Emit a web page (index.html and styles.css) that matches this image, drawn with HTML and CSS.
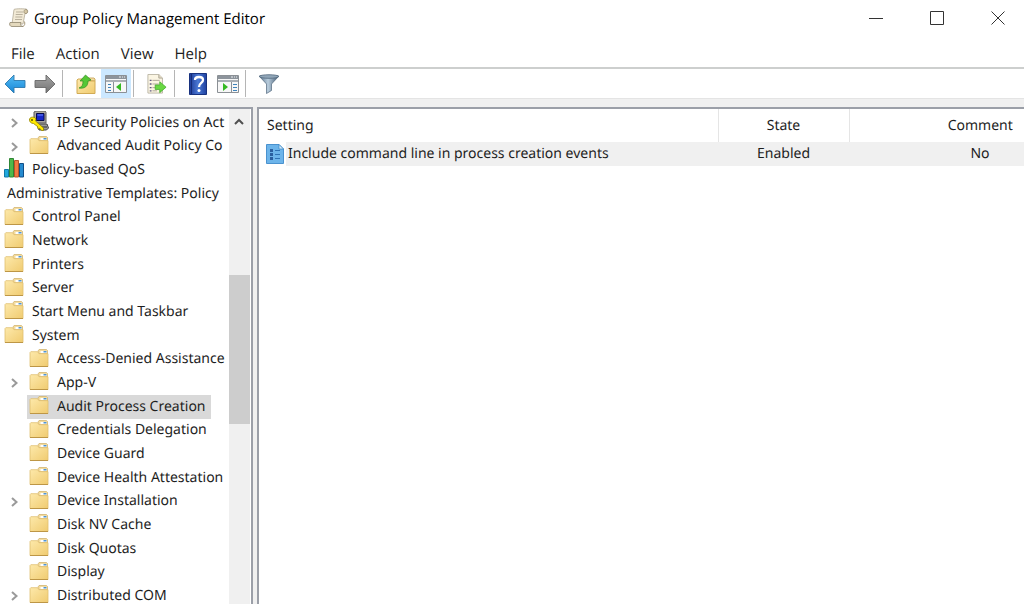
FILE: index.html
```html
<!DOCTYPE html>
<html lang="en">
<head>
<meta charset="utf-8">
<title>Group Policy Management Editor</title>
<link rel="stylesheet" href="styles.css">
</head>
<body>
<svg class="defs" aria-hidden="true">
  <defs>
    <linearGradient id="gold" x1="0" y1="0" x2="1" y2="1"><stop offset="0" stop-color="#fde9ab"/><stop offset="1" stop-color="#f0cb70"/></linearGradient>
    <linearGradient id="blue" x1="0" y1="0" x2="0" y2="1"><stop offset="0" stop-color="#55bdf5"/><stop offset="1" stop-color="#1685d6"/></linearGradient>
    <linearGradient id="grey" x1="0" y1="0" x2="0" y2="1"><stop offset="0" stop-color="#a5a5a5"/><stop offset="1" stop-color="#737373"/></linearGradient>
    <linearGradient id="steel" x1="0" y1="0" x2="1" y2="0"><stop offset="0" stop-color="#56708a"/><stop offset=".45" stop-color="#b9cddd"/><stop offset="1" stop-color="#3f566e"/></linearGradient>
    <linearGradient id="navy" x1="0" y1="0" x2="1" y2="0"><stop offset="0" stop-color="#1d3a96"/><stop offset=".5" stop-color="#4a78d4"/><stop offset="1" stop-color="#1f419f"/></linearGradient>
    <symbol id="folder" viewBox="0 0 20 20">
      <path d="M9 5.500V3l1-1.500h7.500l1 1V6z" fill="#f3dca0" stroke="#d3b571" stroke-width=".8"/>
      <path d="M11.500 3h6v2h-6z" fill="#fff"/><path d="M14.500 3h3v1.500h-3z" fill="#4f94d3"/>
      <path d="M1 4.500l.8-.8h6.700l1.500 2h9v12.800H1z" fill="url(#gold)" stroke="#dfbf70" stroke-width=".8"/>
      <path d="M1 18.500h18" stroke="#bd9646" fill="none"/>
    </symbol>
    <symbol id="panel" viewBox="0 0 22 20">
      <path d="M.5 1.500h21v17H.5z" fill="#f7f7f7" stroke="#8b9095"/>
      <path d="M1 2h20v3H1z" fill="#8d949c"/><path d="M14 3h2M17 3h1M19 3h1" stroke="#e9edf0"/>
      <path d="M1 6h20v2H1z" fill="#a9afb5"/>
    </symbol>
  </defs>
</svg>

<div class="window">
  <header class="titlebar">
    <svg class="app-icon" viewBox="0 0 20 20">
      <path d="M5 1.500C6 .5 17 .5 18 1.500s1 3.500-.5 4H16L14 16H3z" fill="#f2ead6" stroke="#b3aa96" stroke-width=".8"/>
      <path d="M16 5.500c-2-1-1-4 1-4.300 2 .5 2 4 .3 4.300z" fill="#d5c7a5" stroke="#91866e" stroke-width=".7"/>
      <path d="M1 14.500h11c-1 2 0 4 2 4H3c-2 0-3-2-2-4z" fill="#e4d9bd" stroke="#91866e" stroke-width=".8"/>
      <path d="M14 18.500c2-1 2-3 1.500-5" fill="none" stroke="#a8997a"/>
      <path d="M7 4h7M6.700 6.500h7M6.300 9h7M6 11.500h7" stroke="#b9b09d"/>
    </svg>
    <h1 class="title">Group Policy Management Editor</h1>
    <div class="window-controls">
      <button class="window-button" aria-label="Minimize"><svg viewBox="0 0 14 14"><path d="M0 7.500h14"/></svg></button>
      <button class="window-button" aria-label="Maximize"><svg viewBox="0 0 14 14"><path d="M.5 .5h13v13H.5z"/></svg></button>
      <button class="window-button" aria-label="Close"><svg viewBox="0 0 14 14"><path d="M.5 .5l13 13M13.500 .5l-13 13"/></svg></button>
    </div>
  </header>

  <nav class="menubar">
    <button class="menu">File</button>
    <button class="menu">Action</button>
    <button class="menu">View</button>
    <button class="menu">Help</button>
  </nav>

  <div class="toolbar">
    <button class="tool" aria-label="Back"><svg class="arrow" viewBox="0 0 22 20"><path d="M1 10l9-9v5.500h11v7H10V19z" fill="url(#blue)" stroke="#2c78ad" stroke-width=".9"/></svg></button>
    <button class="tool" aria-label="Forward"><svg class="arrow" viewBox="0 0 22 20"><path d="M21 10l-9-9v5.500H1v7h11V19z" fill="url(#grey)" stroke="#686868" stroke-width=".9"/></svg></button>
    <span class="separator"></span>
    <button class="tool" aria-label="Up one level"><svg viewBox="0 0 20 20"><path d="M11 6V5l1-1h6l1 1v2z" fill="#f3dca0" stroke="#cfae68"/><path d="M1 6l1-1h7l1 2h9v12.500H1z" fill="url(#gold)" stroke="#d2ab55"/><path d="M3 14c3-1 4-3 4-7H4l5.500-6L15 6l-3 1c0 5-3 8-9 7z" fill="#55c736" stroke="#318e23" stroke-width=".7"/></svg></button>
    <button class="tool tool-active" aria-label="Show console tree" aria-pressed="true"><svg class="wide" viewBox="0 0 22 20"><use href="#panel"/><path d="M8.500 8v10" stroke="#8b9095"/><path d="M3 10.500h3M3 13.500h3M3 16.500h3" stroke="#3d83bb"/><path d="M16 9v8l-5-4z" fill="#35b922"/></svg></button>
    <span class="separator"></span>
    <button class="tool" aria-label="Export list"><svg class="wide" viewBox="0 0 22 22"><path d="M1 .5h12l4 4V21H1z" fill="#fbf5e3" stroke="#b9b3a3"/><path d="M13 .5v4h4" fill="#e4dbc4" stroke="#a9a393"/><path d="M3 7h2M3 11h2M3 15h2M3 18.500h2" stroke="#615b82" stroke-width="1.500"/><path d="M6 7h8M6 11h7M6 15h6M6 18.500h5" stroke="#a9a393"/><path d="M9 12h5V8.500l7 6-7 6V17H9z" fill="#69d843" stroke="#3fa52b" stroke-width=".8"/></svg></button>
    <span class="separator"></span>
    <button class="tool" aria-label="Help topics"><svg class="book" viewBox="0 0 18 22"><path d="M.5 .5h17v21H.5z" fill="url(#navy)" stroke="#18327f"/><path d="M2.500 1v20" stroke="#152d78"/><path d="M6 7c0-4 8-4 8 0 0 3-4 3-4 7" fill="none" stroke="#fff" stroke-width="2.300"/><circle cx="10" cy="17.500" r="1.500" fill="#fff"/></svg></button>
    <button class="tool" aria-label="Show action pane"><svg class="wide" viewBox="0 0 22 20"><use href="#panel"/><path d="M14.500 8v10" stroke="#8b9095"/><path d="M16 10.500h4M16 13.500h4M16 16.500h4" stroke="#3d83bb"/><path d="M6 9v8l5-4z" fill="#35b922"/></svg></button>
    <span class="separator"></span>
    <button class="tool" aria-label="Filter"><svg viewBox="0 0 20 20"><path d="M0 2l7.500 8v9.500l5-3V10L20 2z" fill="url(#steel)" stroke="#51677c" stroke-width=".7"/><ellipse cx="10" cy="2.500" rx="9.700" ry="1.800" fill="#91a6b8" stroke="#51677c" stroke-width=".8"/></svg></button>
  </div>

  <main class="workspace">
    <section class="tree-pane">
      <ul class="tree">
        <li class="node child"><svg class="chevron" viewBox="0 0 8 10"><path d="M1 1l4.500 4L1 9"/></svg><span class="entry"><svg class="icon" viewBox="0 0 20 20"><path d="M5 1l2-1h9l1 1.500V12H8l-3-1.500z" fill="#aaa79f" stroke="#5c5a58"/><path d="M7.500 2.500h7.500v7H7.500z" fill="#1626c9" stroke="#06094b"/><path d="M8.500 4H14" stroke="#6b84ff"/><path d="M8 13h10l1.500 4-2 2H10z" fill="#9a9a9a" stroke="#444"/><path d="M10 16h8" stroke="#333"/><path d="M.5 8c1-2.500 5.500-2.500 6.500 0l-.5 2 8 7V19.500h-2l-1.500-2-2 .5-.500-2.500-4-3C2 12.500 0 10.500 .5 8z" fill="#ffe900" stroke="#8f8100" stroke-width=".8"/><circle cx="3" cy="9" r="1" fill="#5a5200"/></svg>IP Security Policies on Act</span></li>
        <li class="node child"><svg class="chevron" viewBox="0 0 8 10"><path d="M1 1l4.500 4L1 9"/></svg><span class="entry"><svg class="icon"><use href="#folder"/></svg>Advanced Audit Policy Co</span></li>
        <li class="node"><span class="entry"><svg class="icon chart" viewBox="0 0 20 20"><path d="M.5 11.500h4V19h-4z" fill="#20a9dc" stroke="#1479a8"/><path d="M5.500 .5h4V19h-4z" fill="#4eb84a" stroke="#2f8736"/><path d="M10.500 2.500h4V19h-4z" fill="#ef7b42" stroke="#b85328"/><path d="M15.500 5.500h4V19h-4z" fill="#268bd0" stroke="#124f87"/></svg>Policy-based QoS</span></li>
        <li class="node plain"><span class="entry">Administrative Templates: Policy</span></li>
        <li class="node"><span class="entry"><svg class="icon"><use href="#folder"/></svg>Control Panel</span></li>
        <li class="node"><span class="entry"><svg class="icon"><use href="#folder"/></svg>Network</span></li>
        <li class="node"><span class="entry"><svg class="icon"><use href="#folder"/></svg>Printers</span></li>
        <li class="node"><span class="entry"><svg class="icon"><use href="#folder"/></svg>Server</span></li>
        <li class="node"><span class="entry"><svg class="icon"><use href="#folder"/></svg>Start Menu and Taskbar</span></li>
        <li class="node"><span class="entry"><svg class="icon"><use href="#folder"/></svg>System</span></li>
        <li class="node child"><span class="entry"><svg class="icon"><use href="#folder"/></svg>Access-Denied Assistance</span></li>
        <li class="node child"><svg class="chevron" viewBox="0 0 8 10"><path d="M1 1l4.500 4L1 9"/></svg><span class="entry"><svg class="icon"><use href="#folder"/></svg>App-V</span></li>
        <li class="node child"><span class="entry selected"><svg class="icon"><use href="#folder"/></svg>Audit Process Creation</span></li>
        <li class="node child"><span class="entry"><svg class="icon"><use href="#folder"/></svg>Credentials Delegation</span></li>
        <li class="node child"><span class="entry"><svg class="icon"><use href="#folder"/></svg>Device Guard</span></li>
        <li class="node child"><span class="entry"><svg class="icon"><use href="#folder"/></svg>Device Health Attestation</span></li>
        <li class="node child"><svg class="chevron" viewBox="0 0 8 10"><path d="M1 1l4.500 4L1 9"/></svg><span class="entry"><svg class="icon"><use href="#folder"/></svg>Device Installation</span></li>
        <li class="node child"><span class="entry"><svg class="icon"><use href="#folder"/></svg>Disk NV Cache</span></li>
        <li class="node child"><span class="entry"><svg class="icon"><use href="#folder"/></svg>Disk Quotas</span></li>
        <li class="node child"><span class="entry"><svg class="icon"><use href="#folder"/></svg>Display</span></li>
        <li class="node child"><svg class="chevron" viewBox="0 0 8 10"><path d="M1 1l4.500 4L1 9"/></svg><span class="entry"><svg class="icon"><use href="#folder"/></svg>Distributed COM</span></li>
      </ul>
      <div class="scrollbar">
        <button class="scroll-up" aria-label="Scroll up"><svg viewBox="0 0 10 8"><path d="M1 6l4-4 4 4"/></svg></button>
        <div class="track-before"></div>
        <div class="thumb"></div>
        <div class="track-after"></div>
      </div>
    </section>

    <section class="list-pane">
      <table class="settings">
        <thead>
          <tr><th class="col-setting">Setting</th><th class="col-state">State</th><th class="col-comment">Comment</th></tr>
        </thead>
        <tbody>
          <tr>
            <td class="col-setting"><div class="setting"><svg class="policy-icon" viewBox="0 0 18 20"><path d="M.5 .5H13L17.500 5v14.500H.5z" fill="#6cb4ea" stroke="#4a92cf"/><path d="M13 .5V5h4.500z" fill="#d6ebfa" stroke="#3e86c4" stroke-width=".7"/><path d="M4 5h3v3H4zM4 9h3v3H4zM4 13h3v3H4z" fill="#2a5f9f"/><path d="M9 6.500h5M9 10.500h5M9 14.500h5" stroke="#2f73b5"/></svg><span class="setting-name">Include command line in process creation events</span></div></td>
            <td class="col-state">Enabled</td>
            <td class="col-comment">No</td>
          </tr>
        </tbody>
      </table>
    </section>
  </main>
</div>
</body>
</html>
```
FILE: styles.css
```css
* { box-sizing: border-box; }
body {
  margin: 0;
  font: 15px/22px "Open Sans", "Noto Sans", sans-serif;
  text-rendering: geometricPrecision;
  color: #1e1e1e;
  background: #fff;
}
button { font: inherit; color: inherit; background: none; border: 0; padding: 0; text-rendering: inherit; }
svg { display: block; flex: none; }
.defs { position: absolute; width: 0; height: 0; }
.window { display: flex; flex-direction: column; height: 100vh; overflow: hidden; }

.titlebar { display: flex; align-items: center; height: 36px; padding-left: 9px; flex: none; }
.app-icon { width: 20px; height: 20px; }
.title { margin: 0 auto 0 5px; padding-top: 2px; font-size: 15px; font-weight: 400; color: #000; white-space: nowrap; }
.window-controls { display: flex; gap: 9px; }
.window-button { display: grid; place-items: center; width: 52px; height: 36px; }
.window-button svg { width: 14px; height: 14px; fill: none; stroke: #333; overflow: visible; }

.menubar { display: flex; gap: 21px; height: 31px; padding: 7px 11px 0; flex: none; }
.menu { height: 22px; }

.toolbar { display: flex; align-items: center; height: 31px; border-top: 2px solid #cdcfce; flex: none; }
.tool { display: grid; place-items: center; width: 30px; height: 29px; }
.tool svg { width: 20px; height: 20px; }
.tool .wide, .tool .arrow { width: 22px; }
.tool .book { width: 18px; height: 22px; }
.tool-active { background: #cce8ff; }
.separator { width: 1px; height: 27px; margin: 0 8px 0 2px; background: #b5b5b5; }

.workspace { display: flex; flex: 1; min-height: 0; padding-top: 8px; background: #f0f0f0; border-top: 1px solid #e4e4e4; font-family: "Noto Sans", "Open Sans", sans-serif; font-size: 14px; }
.tree-pane { display: flex; width: 253px; flex: none; background: #fff; border: 2px solid #9b9fa8; border-left: 0; border-bottom: 0; overflow: hidden; }
.tree { display: grid; grid-auto-rows: minmax(22px, 1fr); flex: 1; min-width: 0; margin: 0 0 -4px; padding: 2px 0 0; list-style: none; overflow: hidden; }
.node { display: flex; align-items: stretch; justify-content: flex-start; position: relative; padding-left: 2px; white-space: nowrap; }
.child { padding-left: 27px; }
.plain { padding-left: 5px; }
.chevron { position: absolute; left: 11px; top: 7px; width: 8px; height: 10px; fill: none; stroke: #9a9a9a; stroke-width: 2; }
.entry { display: flex; align-items: center; gap: 8px; padding: 0 5px 0 2px; }
.icon { width: 20px; height: 20px; margin-bottom: 4px; }
.selected { background: #d9d9d9; }

.scrollbar { display: flex; flex-direction: column; width: 22px; flex: none; background: #f0f0f0; border-right: 1px solid #fff; }
.scroll-up { display: grid; place-items: center; height: 25px; padding-right: 2px; }
.scroll-up svg { width: 10px; height: 8px; fill: none; stroke: #505050; stroke-width: 2; }
.track-before { flex: 141; }
.thumb { flex: 150; background: #cdcdcd; }
.track-after { flex: 180; }

.list-pane { flex: 1; min-width: 0; margin-left: 4px; background: #fff; border: 2px solid #9b9fa8; border-right: 0; border-bottom: 0; }
.settings { width: 100%; border-collapse: collapse; table-layout: fixed; text-align: center; }
.settings th { height: 33px; padding: 0; font-weight: 400; border-right: 1px solid #e5e5e5; }
.settings td { height: 24px; padding: 0; background: #f0f0f0; }
.settings .col-setting { text-align: left; }
.settings th.col-setting { padding-left: 8px; }
.settings .col-state { width: 131px; }
.settings .col-comment { width: 175px; padding-left: 87px; border-right: 0; }
.settings td.col-setting { background: none; }
.setting { display: flex; align-items: center; padding-left: 7px; }
.policy-icon { width: 18px; height: 20px; }
.setting-name { flex: 1; margin-left: 2px; padding-left: 2px; line-height: 24px; background: #f0f0f0; white-space: nowrap; }
```
